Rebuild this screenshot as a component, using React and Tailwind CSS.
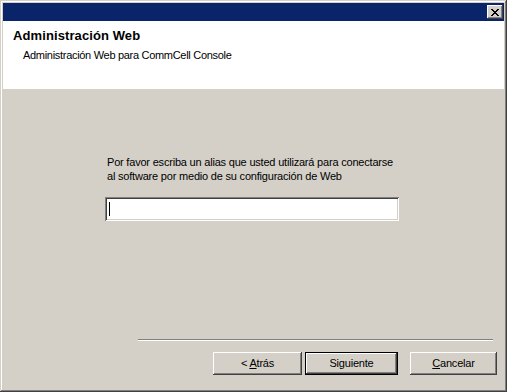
import React from 'react'

const font = { fontFamily: '"Liberation Sans", Arial, sans-serif' }

function Btn({ children, def, className }) {
    const inner = (
        <div className="h-full w-full flex items-center justify-center bg-[#d4d0c8] text-[11px] tracking-[-0.2px] text-black shadow-[inset_-1px_-1px_#404040,inset_1px_1px_#ffffff,inset_-2px_-2px_#808080,inset_2px_2px_#d4d0c8]">
            {children}
        </div>
    )
    if (def) {
        return <div className={`border border-black ${className}`}>{inner}</div>
    }
    return <div className={className}>{inner}</div>
}

export default function App(){
    return (
        <div style={font} className="w-[507px] h-[392px] bg-[#d4d0c8] p-[3px] flex flex-col shadow-[inset_-1px_-1px_#404040,inset_1px_1px_#d4d0c8,inset_-2px_-2px_#808080,inset_2px_2px_#ffffff]">
            <div className="h-[18px] bg-[#0a246a] flex items-center justify-end pr-[1px]">
                <div className="w-[16px] h-[14px] bg-[#d4d0c8] flex items-center justify-center shadow-[inset_-1px_-1px_#404040,inset_1px_1px_#ffffff,inset_-2px_-2px_#808080]">
                    <svg width="8" height="7" viewBox="0 0 8 7" shapeRendering="crispEdges">
                        <path d="M0 0h2v1H0zM6 0h2v1H6zM1 1h2v1H1zM5 1h2v1H5zM2 2h4v1H2zM3 3h2v1H3zM2 4h4v1H2zM1 5h2v1H1zM5 5h2v1H5zM0 6h2v1H0zM6 6h2v1H6z" fill="#000"/>
                    </svg>
                </div>
            </div>
            <div className="h-[68px] bg-white pl-[10px] pt-[7px]">
                <div className="text-[13px] font-bold leading-[16px] tracking-[0.1px] text-black">Administración Web</div>
                <div className="text-[11px] leading-[14px] tracking-[-0.3px] text-black pl-[10px] mt-[4px]">Administración Web para CommCell Console</div>
            </div>
            <div className="flex-1 flex flex-col">
                <div className="pl-[104px] pt-[66px] text-[11px] leading-[14px] tracking-[-0.2px] text-black">
                    <div>Por favor escriba un alias que usted utilizará para conectarse</div>
                    <div>al software por medio de su configuración de Web</div>
                </div>
                <div className="ml-[102px] mt-[14px] w-[294px] h-[24px] bg-white flex items-center pl-[3px] shadow-[inset_1px_1px_#808080,inset_-1px_-1px_#ffffff,inset_2px_2px_#404040,inset_-2px_-2px_#d4d0c8]">
                    <div className="w-[1px] h-[14px] bg-black ml-[1px]"></div>
                </div>
                <div className="ml-[135px] mr-[11px] mt-[118px] h-[2px] border-t border-[#808080] border-b border-b-white"></div>
                <div className="flex justify-end mt-[11px] pr-[7px]">
                    <Btn className="w-[89px] h-[23px] mr-[3px]"><span>&lt; <u>A</u>trás</span></Btn>
                    <Btn def className="w-[93px] h-[23px] mr-[12px]"><span>Siguiente</span></Btn>
                    <Btn className="w-[87px] h-[23px]"><span><u>C</u>ancelar</span></Btn>
                </div>
            </div>
        </div>
    )
}
